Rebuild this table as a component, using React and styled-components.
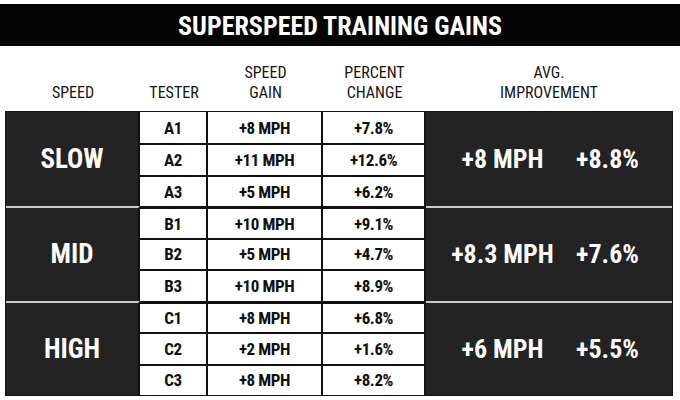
import React from "react";
import styled, { createGlobalStyle } from "styled-components";

const GlobalStyle = createGlobalStyle`
  body {
    margin: 0;
    background: #fff;
    font-family: "Roboto Condensed", "Roboto", "Liberation Sans", sans-serif;
  }
`;

const COLS = "134px 68px 115px 103px 246px";

const Page = styled.div`
  width: 680px;
  height: 400px;
  padding-top: 4px;
  box-sizing: border-box;
  overflow: hidden;
`;

const TitleBar = styled.h1`
  margin: 0;
  height: 42px;
  line-height: 45px;
  background: #050505;
  color: #fff;
  text-align: center;
  font-size: 26px;
  font-weight: 700;
  overflow: hidden;
`;

const HeaderRow = styled.div`
  display: grid;
  grid-template-columns: ${COLS};
  align-items: end;
  height: 65px;
  box-sizing: border-box;
  margin-left: 6px;
  padding-bottom: 8px;
`;

const HeaderLabel = styled.div`
  text-align: center;
  font-size: 16px;
  line-height: 20px;
  font-weight: 400;
  color: #151515;
`;

const Table = styled.div`
  display: grid;
  grid-template-columns: ${COLS};
  grid-template-rows: repeat(9, 1fr);
  height: 285px;
  width: 668px;
  box-sizing: border-box;
  margin-left: 5px;
  border: 1px solid #111;
  background: #111;
`;

const Cell = styled.div`
  display: flex;
  align-items: center;
  justify-content: center;
  box-sizing: border-box;
  background: #fff;
  color: #111;
  font-size: 17px;
  font-weight: 700;
  letter-spacing: -0.4px;
  border-right: 2px solid #111;
  border-top: ${(p) => (p.$top ? `${p.$top}px solid #111` : "none")};
`;

const GroupLabel = styled.div`
  grid-row: span 3;
  display: flex;
  align-items: center;
  justify-content: center;
  box-sizing: border-box;
  background: #232323;
  color: #fafafa;
  font-size: 27px;
  font-weight: 700;
  border-right: 2px solid #111;
  border-top: ${(p) => (p.$first ? "none" : "2px solid #c9c9c9")};
`;

const AvgCell = styled.div`
  grid-row: span 3;
  display: grid;
  grid-template-columns: 1fr 1fr;
  align-items: center;
  justify-items: center;
  box-sizing: border-box;
  padding: 0 12px 0 24px;
  background: #232323;
  color: #fafafa;
  font-size: 26px;
  font-weight: 700;
  border-top: ${(p) => (p.$first ? "none" : "2px solid #c9c9c9")};
`;

const groups = [
  {
    name: "SLOW",
    avgSpeed: "+8 MPH",
    avgPct: "+8.8%",
    rows: [
      ["A1", "+8 MPH", "+7.8%"],
      ["A2", "+11 MPH", "+12.6%"],
      ["A3", "+5 MPH", "+6.2%"],
    ],
  },
  {
    name: "MID",
    avgSpeed: "+8.3 MPH",
    avgPct: "+7.6%",
    rows: [
      ["B1", "+10 MPH", "+9.1%"],
      ["B2", "+5 MPH", "+4.7%"],
      ["B3", "+10 MPH", "+8.9%"],
    ],
  },
  {
    name: "HIGH",
    avgSpeed: "+6 MPH",
    avgPct: "+5.5%",
    rows: [
      ["C1", "+8 MPH", "+6.8%"],
      ["C2", "+2 MPH", "+1.6%"],
      ["C3", "+8 MPH", "+8.2%"],
    ],
  },
];

const headers = [
  ["SPEED"],
  ["TESTER"],
  ["SPEED", "GAIN"],
  ["PERCENT", "CHANGE"],
  ["AVG.", "IMPROVEMENT"],
];

const App = () => {
  return (
    <>
      <GlobalStyle />
      <Page>
        <TitleBar>SUPERSPEED TRAINING GAINS</TitleBar>
        <HeaderRow>
          {headers.map((lines, i) => (
            <HeaderLabel key={i}>
              {lines.map((l) => (
                <div key={l}>{l}</div>
              ))}
            </HeaderLabel>
          ))}
        </HeaderRow>
        <Table>
          {groups.map((group, gi) =>
            group.rows.map((row, ri) => {
              // first row of a group gets the heavier divider (none at the very top)
              const top = ri === 0 ? (gi === 0 ? 0 : 3) : 2;
              return (
                <React.Fragment key={row[0]}>
                  {ri === 0 && (
                    <GroupLabel $first={gi === 0}>{group.name}</GroupLabel>
                  )}
                  {row.map((value, ci) => (
                    <Cell key={ci} $top={top}>
                      {value}
                    </Cell>
                  ))}
                  {ri === 0 && (
                    <AvgCell $first={gi === 0}>
                      <span>{group.avgSpeed}</span>
                      <span>{group.avgPct}</span>
                    </AvgCell>
                  )}
                </React.Fragment>
              );
            })
          )}
        </Table>
      </Page>
    </>
  );
};

export default App;
